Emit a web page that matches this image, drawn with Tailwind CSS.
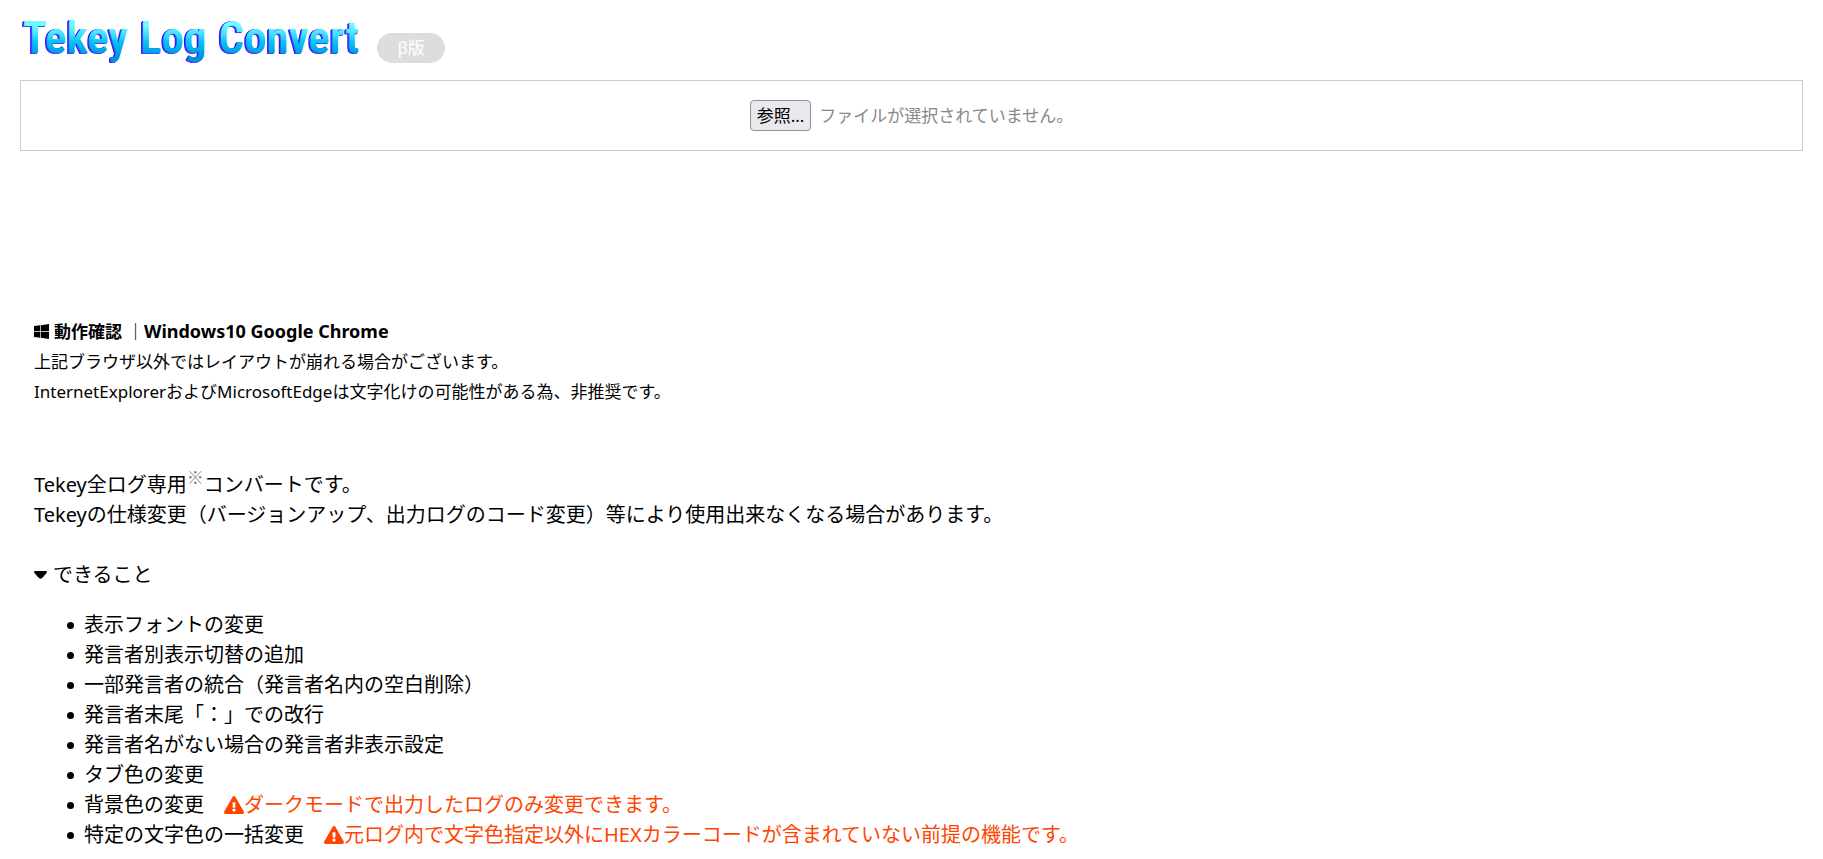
<!DOCTYPE html>
<html lang="ja">
<head>
  <meta charset="UTF-8" />
  <meta name="viewport" content="width=device-width, initial-scale=1.0"/>
  <title>Tekey Log Convert</title>
  <script src="https://cdn.jsdelivr.net/npm/@tailwindcss/browser@4"></script>
</head>
<body class="bg-white text-black text-[20px] leading-[30px] font-['Noto_Sans','Noto_Sans_CJK_JP',sans-serif]">

  <!-- Header -->
  <header class="flex items-end gap-[18px] h-20 px-[23px] pb-[17px]">
    <h1 class="flex gap-3 font-['Roboto_Condensed','Liberation_Sans_Narrow','DejaVu_Sans_Condensed',sans-serif] font-semibold text-[45px] leading-[50px] whitespace-nowrap text-transparent bg-clip-text bg-linear-to-b from-[#6ffcff] from-25% via-[#0cc8f6] via-55% to-[#0090dc] to-90% [filter:drop-shadow(-1px_1px_0_#3a4cff)_drop-shadow(-1px_0_0_#2410f5)]">
      <span>Tekey</span>
      <span>Log</span>
      <span>Convert</span>
    </h1>
    <span class="rounded-full bg-[#ddd] text-white text-[17px] px-5">β版</span>
  </header>

  <!-- File select -->
  <div class="mx-5 py-[19px] border border-[#ccc] flex justify-center items-center gap-2 text-[17px]">
    <input type="file" id="logFile" class="hidden" />
    <button type="button" onclick="document.getElementById('logFile').click()" class="h-[31px] px-[6px] leading-[29px] rounded border border-[#8f8f9d] bg-[#e9e9ed]">参照...</button>
    <label for="logFile" id="fileName" class="text-[#888]">ファイルが選択されていません。</label>
  </div>

  <main class="px-[34px] pt-[165px]">
    <!-- Browser support -->
    <section class="text-[17px] mb-[63px]">
      <h2 class="font-bold flex items-center gap-[5px]">
        <svg class="size-[15px]" viewBox="0 0 448 448" fill="currentColor" aria-hidden="true"><path d="M0 62l184-25v177H0zm0 324l184 25V236H0zm204 28l244 34V236H204zm0-380v180h244V0z"/></svg>
        <span>動作確認</span>
        <span>｜<span class="text-[18px]">Windows10 Google Chrome</span></span>
      </h2>
      <p>上記ブラウザ以外ではレイアウトが崩れる場合がございます。</p>
      <p>InternetExplorerおよびMicrosoftEdgeは文字化けの可能性がある為、非推奨です。</p>
    </section>

    <p>Tekey全ログ専用<sup class="font-['Noto_Sans_CJK_JP',sans-serif] text-[17px] text-[#888]">※</sup>コンバートです。</p>
    <p class="mb-[30px]">Tekeyの仕様変更（バージョンアップ、出力ログのコード変更）等により使用出来なくなる場合があります。</p>

    <!-- Features -->
    <details open>
      <summary class="flex items-center gap-[6px] cursor-pointer">
        <svg class="w-[13px] h-[8px]" viewBox="0 0 13 8" fill="currentColor" aria-hidden="true"><path d="M1 0h11q1 0 1 1-1 2-5 6-1.500 1.500-3 0Q1 3 0 1q0-1 1-1z"/></svg>
        できること
      </summary>
      <ul class="pl-[33px] pt-5 *:before:inline-block *:before:size-[7px] *:before:rounded-full *:before:bg-black *:before:mr-[10px] *:before:align-[3px]">
        <li>表示フォントの変更</li>
        <li>発言者別表示切替の追加</li>
        <li>一部発言者の統合（発言者名内の空白削除）</li>
        <li>発言者末尾「：」での改行</li>
        <li>発言者名がない場合の発言者非表示設定</li>
        <li>タブ色の変更</li>
        <li>背景色の変更　<span class="text-[#ff4500]"><svg class="inline-block w-5 h-[18px] align-[-2px]" viewBox="0 0 576 512" fill="currentColor" aria-hidden="true"><path d="M569.500 440C588 472 564.800 512 527.900 512H48.100c-36.900 0-60-40.100-41.600-72L246.400 24c18.500-32 64.700-32 83.200 0l239.900 416zM288 354c-25.400 0-46 20.600-46 46s20.600 46 46 46 46-20.600 46-46-20.600-46-46-46zm-43.700-165.300l7.400 136c.3 6.400 5.600 11.300 12 11.300h48.500c6.400 0 11.600-5 12-11.300l7.400-136c.4-6.900-5.100-12.700-12-12.700h-63.400c-6.900 0-12.300 5.800-12 12.700z"/></svg>ダークモードで出力したログのみ変更できます。</span></li>
        <li>特定の文字色の一括変更　<span class="text-[#ff4500]"><svg class="inline-block w-5 h-[18px] align-[-2px]" viewBox="0 0 576 512" fill="currentColor" aria-hidden="true"><path d="M569.500 440C588 472 564.800 512 527.900 512H48.100c-36.900 0-60-40.100-41.600-72L246.400 24c18.500-32 64.700-32 83.200 0l239.900 416zM288 354c-25.400 0-46 20.600-46 46s20.600 46 46 46 46-20.600 46-46-20.600-46-46-46zm-43.700-165.300l7.400 136c.3 6.400 5.600 11.300 12 11.300h48.500c6.400 0 11.600-5 12-11.300l7.400-136c.4-6.900-5.100-12.700-12-12.700h-63.400c-6.900 0-12.300 5.800-12 12.700z"/></svg>元ログ内で文字色指定以外にHEXカラーコードが含まれていない前提の機能です。</span></li>
      </ul>
    </details>
  </main>

  <script>
    // Show the selected file name
    document.getElementById("logFile").addEventListener("change", (e) => {
      const file = e.target.files[0];
      document.getElementById("fileName").textContent = file ? file.name : "ファイルが選択されていません。";
    });
  </script>
</body>
</html>
